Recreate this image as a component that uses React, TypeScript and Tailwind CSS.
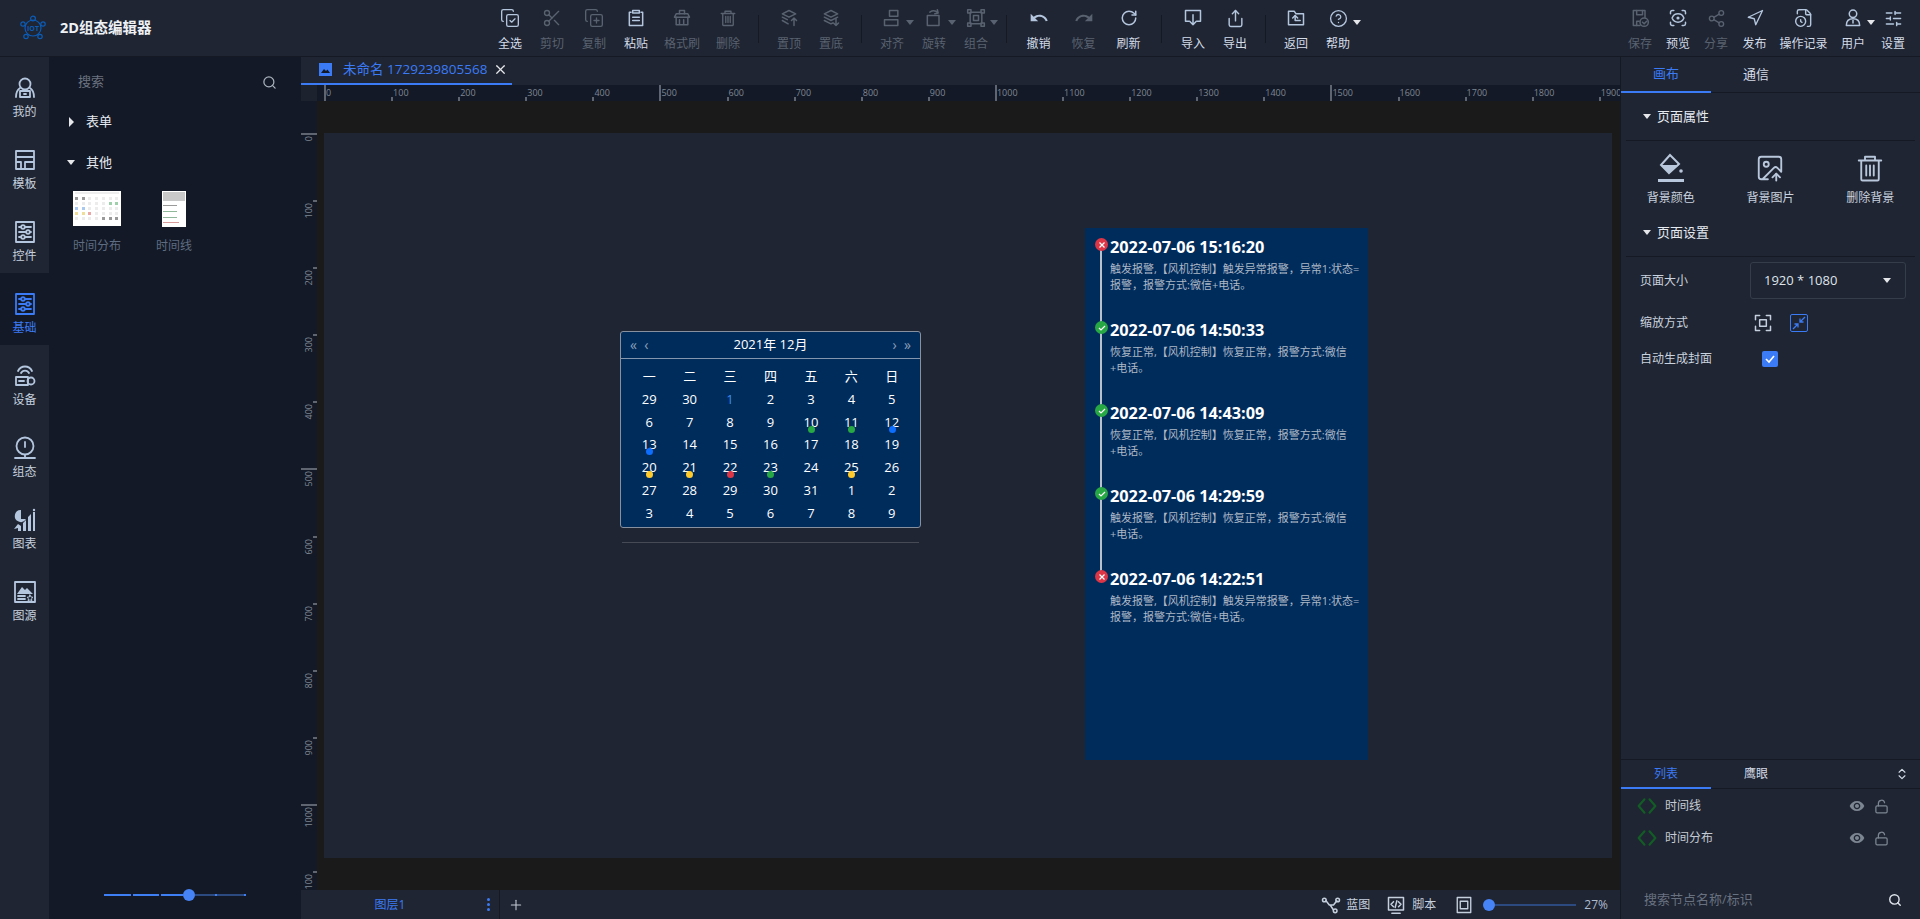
import type { ReactNode } from 'react';
import {
  ChevronsUpDown, CircleHelp, CopyCheck, CopyPlus, FileClock, ImageUp, LockOpen, Navigation,
  Plus, RotateCw, ScanEye, Scissors, Search, Share, Share2, SlidersHorizontal, X,
} from 'lucide-react';

const Svg = ({ children, size = 20, sw = 1.8 }: { children: ReactNode; size?: number; sw?: number }) => (
  <svg width={size} height={size} viewBox="0 0 24 24" fill="none" stroke="currentColor" strokeWidth={sw} strokeLinecap="round" strokeLinejoin="round">
    {children}
  </svg>
);

const Solid = ({ d, size = 20 }: { d: string; size?: number }) => (
  <svg width={size} height={size} viewBox="0 0 24 24" fill="currentColor">
    <path d={d} />
  </svg>
);

const Caret = ({ right = false }: { right?: boolean }) =>
  right ? (
    <span className="inline-block h-0 w-0 border-y-[5px] border-l-[5px] border-y-transparent border-l-[#e5e7eb]" />
  ) : (
    <span className="inline-block h-0 w-0 border-x-[4px] border-t-[5px] border-x-transparent border-t-[#e5e7eb]" />
  );

// hand drawn toolbar icons
const Paste = () => <Svg><path d="M8 3h8v3H8z" /><path d="M6 5H4v16h16V5h-2" /><path d="M8 11h8M8 15h8" /></Svg>;
const Brush = () => <Svg><path d="M9 7V3h6v4" /><path d="M3 11l2-4h14l2 4z" /><path d="M5 11v9h14v-9M9 14v6M14 14v6" /></Svg>;
const Bin = ({ size = 20, sw = 1.8 }: { size?: number; sw?: number }) => (
  <Svg size={size} sw={sw}><path d="M3 6h18M8 6V3h8v3M5 6v15a1 1 0 0 0 1 1h12a1 1 0 0 0 1-1V6M9 10v8M12 10v8M15 10v8" /></Svg>
);
const ToTop = () => <Svg><path d="M12 3l8 4-8 4-8-4z" /><path d="M4 11l6 3M4 15l7 4" /><path d="M18 21v-9M15 15l3-3 3 3" /></Svg>;
const ToBottom = () => <Svg><path d="M12 3l8 4-8 4-8-4z" /><path d="M4 11l8 4 8-4" /><path d="M4 15l8 4 2-1" /><path d="M18 13v8M15 18l3 3 3-3" /></Svg>;
const Align = () => <Svg><path d="M9 3h10v7H9zM3 14h16v7H3z" /></Svg>;
const Rotate = () => <Svg><path d="M4 9h14v12H4z" /><path d="M7 5c3-2 7-2 10 1M16 2l1 4-4 1" /></Svg>;
const GroupIcon = () => <Svg><path d="M5 5h14v14H5z" /><path d="M2 2h4v4H2zM18 2h4v4h-4zM2 18h4v4H2zM18 18h4v4h-4z" /><path d="M9 9h6v6H9z" /></Svg>;
const Import = () => <Svg><path d="M7 16H3V3h18v13h-4" /><path d="M12 8v12M8 16l4 4 4-4" /></Svg>;
const Back = () => <Svg><path d="M3 20V4h7l2 3h9v13z" /><path d="M8 12l3-3 3 3" /><path d="M11 9v6h6" /></Svg>;
const Save = () => <Svg><path d="M12 21H4V3h14v8" /><path d="M8 3v5h7V3M8 21v-5h3" /><circle cx="17" cy="17" r="5" /><path d="M15 17l2 2 3-3" /></Svg>;
const UserCaret = () => <Svg><circle cx="12" cy="7" r="4.5" /><path d="M4 21c0-6 3-8 8-8s8 2 8 8z" /><path d="M12 15v3" /></Svg>;
const Mine = () => <Svg size={24}><circle cx="12" cy="8" r="5.5" /><path d="M3 21c0-5 1-7 4-9M21 21c0-5-1-7-4-9" /><path d="M7 15h10v6H7z" /><path d="M11 18h2" /></Svg>;
const Template = () => <Svg size={24}><path d="M3 3h18v18H3zM3 9h18M12 14h9M12 14v7M3 14h5v7" /></Svg>;
const Control = () => <Svg size={24}><path d="M3 2h18v20H3z" /><path d="M6 7h12M6 12h12M6 17h12" /><circle cx="10" cy="7" r="1.8" fill="#1f2532" /><circle cx="15" cy="12" r="1.8" fill="#1f2532" /><circle cx="10" cy="17" r="1.8" fill="#1f2532" /></Svg>;
const Device = () => <Svg size={24}><path d="M8 9a4.5 4.5 0 0 1 8 0M5 7c3-6 11-6 14 0" /><path d="M3 13h12v8H3z" /><path d="M6 17h5" /><circle cx="18" cy="17" r="3.5" /></Svg>;
const GaugeIcon = () => <Svg size={24}><circle cx="12" cy="10" r="8.5" /><path d="M12 6v5M8 22h8M2 22h20M12 19v3" /></Svg>;
const ChartIcon = () => (
  <svg width="24" height="24" viewBox="0 0 24 24" fill="currentColor">
    <path d="M8 2a6 6 0 1 0 5 9H8z" />
    <path d="M1 21l4-5 3 2v5H5v-3zM10 23v-8l3-3v11zM15 23V9l3-3v17zM20 23V4h2v19z" />
    <circle cx="21" cy="2" r="1.2" />
  </svg>
);
const ImageSource = () => (
  <Svg size={24}>
    <path d="M2 2h20v20H2z" />
    <path d="M4 14l5-7 3 3 2-2 6 6z" fill="currentColor" stroke="none" />
    <path d="M5 16h7M5 19h7" />
    <path d="M17 15l1 2 2 .3-1.5 1.4.4 2.1-1.9-1-1.9 1 .4-2.1L14 17.3l2-.3z" strokeWidth="1" />
  </Svg>
);

const Bucket = () => (
  <svg width="30" height="30" viewBox="0 0 30 30" fill="none" stroke="#b9c7dc" strokeWidth="2">
    <path d="M14 2l-9 10 8 8 10-9z" />
    <path d="M5 12h18l-10 8z" fill="#b9c7dc" stroke="none" />
    <circle cx="25" cy="18" r="1.8" fill="#b9c7dc" stroke="none" />
    <path d="M2 26h26v3H2z" fill="#b9c7dc" stroke="none" />
  </svg>
);

const undoPath = 'M12.5 8c-2.65 0-5.05.99-6.9 2.6L2 7v9h9l-3.62-3.62c1.39-1.16 3.16-1.88 5.12-1.88 3.54 0 6.55 2.31 7.6 5.5l2.37-.78C21.08 11.03 17.15 8 12.5 8z';
const redoPath = 'M18.4 10.6C16.55 8.99 14.15 8 11.5 8c-4.65 0-8.58 3.03-9.96 7.22L3.9 16c1.05-3.19 4.05-5.5 7.6-5.5 1.95 0 3.73.72 5.12 1.88L13 16h9V7l-3.6 3.6z';
const eyePath = 'M12 4.5C7 4.5 2.73 7.61 1 12c1.73 4.39 6 7.5 11 7.5s9.27-3.11 11-7.5c-1.73-4.39-6-7.5-11-7.5zM12 17c-2.76 0-5-2.24-5-5s2.24-5 5-5 5 2.24 5 5-2.24 5-5 5zm0-8c-1.66 0-3 1.34-3 3s1.34 3 3 3 3-1.34 3-3-1.34-3-3-3z';

type Tool = { label: string; icon: ReactNode; width: string; off?: boolean; caret?: boolean };

const ToolBtn = ({ tool }: { tool: Tool }) => (
  <div className={`flex shrink-0 flex-col items-center ${tool.width} ${tool.off ? 'text-[#596270]' : 'text-[#b4c6de]'}`}>
    <div className="relative flex h-[24px] items-center">
      {tool.icon}
      {tool.caret && (
        <span className={`absolute top-[14px] left-[24px] h-0 w-0 border-x-[4px] border-t-[5px] border-x-transparent ${tool.off ? 'border-t-[#596270]' : 'border-t-[#e5e7eb]'}`} />
      )}
    </div>
    <span className={`mt-[5px] text-[12px] leading-[17px] whitespace-nowrap ${tool.off ? 'text-[#596270]' : 'text-[#d3dce8]'}`}>{tool.label}</span>
  </div>
);

const Sep = ({ w = 'w-[19px]' }: { w?: string }) => (
  <div className={`flex h-[28px] shrink-0 justify-center self-center ${w}`}>
    <div className="h-full w-px bg-[#141923]" />
  </div>
);

const w42 = 'w-[42px]';
const w45 = 'w-[45px]';
const toolGroups: Tool[][] = [
  [
    { label: '全选', icon: <CopyCheck size={20} strokeWidth={1.6} />, width: w42 },
    { label: '剪切', icon: <Scissors size={20} strokeWidth={1.6} />, width: w42, off: true },
    { label: '复制', icon: <CopyPlus size={20} strokeWidth={1.6} />, width: w42, off: true },
    { label: '粘贴', icon: <Paste />, width: w42 },
    { label: '格式刷', icon: <Brush />, width: 'w-[50px]', off: true },
    { label: '删除', icon: <Bin size={18} />, width: w42, off: true },
  ],
  [
    { label: '置顶', icon: <ToTop />, width: w42, off: true },
    { label: '置底', icon: <ToBottom />, width: w42, off: true },
  ],
  [
    { label: '对齐', icon: <Align />, width: w42, off: true, caret: true },
    { label: '旋转', icon: <Rotate />, width: w42, off: true, caret: true },
    { label: '组合', icon: <GroupIcon />, width: w42, off: true, caret: true },
  ],
  [
    { label: '撤销', icon: <Solid d={undoPath} />, width: w45 },
    { label: '恢复', icon: <Solid d={redoPath} />, width: w45, off: true },
    { label: '刷新', icon: <RotateCw size={18} strokeWidth={2} />, width: w45 },
  ],
  [
    { label: '导入', icon: <Import />, width: w42 },
    { label: '导出', icon: <Share size={19} strokeWidth={1.8} />, width: w42 },
  ],
  [
    { label: '返回', icon: <Back />, width: w42 },
    { label: '帮助', icon: <CircleHelp size={19} strokeWidth={1.7} />, width: w42, caret: true },
  ],
];

const rightTools: Tool[] = [
  { label: '保存', icon: <Save />, width: 'w-[38px]', off: true },
  { label: '预览', icon: <ScanEye size={20} strokeWidth={1.8} />, width: 'w-[38px]' },
  { label: '分享', icon: <Share2 size={19} strokeWidth={1.7} />, width: 'w-[38px]', off: true },
  { label: '发布', icon: <Navigation size={18} strokeWidth={1.8} />, width: 'w-[39px]' },
  { label: '操作记录', icon: <FileClock size={20} strokeWidth={1.7} />, width: 'w-[59px]' },
  { label: '用户', icon: <UserCaret />, width: 'w-[40px]', caret: true },
  { label: '设置', icon: <SlidersHorizontal size={19} strokeWidth={1.8} />, width: 'w-[40px]' },
];

const Logo = () => (
  <svg width="26" height="26" viewBox="0 0 26 26" fill="none" stroke="#0b5cb8" strokeWidth="1.2">
    <circle cx="13" cy="13" r="8" />
    <circle cx="13" cy="3.5" r="2.4" />
    <circle cx="3" cy="9" r="2.2" />
    <circle cx="23" cy="9" r="2.2" />
    <circle cx="6" cy="21.5" r="2.2" />
    <circle cx="20" cy="21.5" r="2.2" />
    <text x="13" y="15.5" fontSize="7" fontWeight="700" textAnchor="middle" fill="#0b5cb8" stroke="none">IOT</text>
  </svg>
);

const rail = [
  { label: '我的', icon: <Mine /> },
  { label: '模板', icon: <Template /> },
  { label: '控件', icon: <Control /> },
  { label: '基础', icon: <Control />, active: true },
  { label: '设备', icon: <Device /> },
  { label: '组态', icon: <GaugeIcon /> },
  { label: '图表', icon: <ChartIcon /> },
  { label: '图源', icon: <ImageSource /> },
];

const rulerMarks = Array.from({ length: 20 }, (_, i) => i * 100);
const sideMarks = Array.from({ length: 12 }, (_, i) => i * 100);

const CalThumb = () => (
  <div className="flex h-[35px] w-[48px] flex-col bg-white px-[2px] py-[1px]">
    <div className="mb-[3px] h-[2px] w-full bg-[#eeeeee]" />
    <div className="grid grid-cols-7 gap-x-[3px] gap-y-[2px]">
      {Array.from({ length: 35 }, (_, i) => (
        <span
          key={i}
          className={`h-[3px] w-[3px] ${
            i < 2 || i > 31 ? 'bg-[#999]' : i === 12 || i === 13 ? 'bg-[#9fd0ac]' : i === 14 || i === 15 ? 'bg-[#a8c8f0]' : i === 21 || i === 22 ? 'bg-[#f0dd98]' : i === 23 ? 'bg-[#eaa5a5]' : 'bg-[#ececec]'
          }`}
        />
      ))}
    </div>
  </div>
);

const TimeThumb = () => (
  <div className="flex h-[36px] w-[24px] flex-col bg-white p-[1px]">
    <div className="h-[9px] w-full bg-[#c9c9c9]" />
    <div className="mt-[4px] h-[1px] w-[14px] bg-[#9a9a9a]" />
    <div className="mt-[5px] h-[1px] w-[14px] bg-[#8fb79a]" />
    <div className="mt-[5px] h-[1px] w-[14px] bg-[#8fb79a]" />
    <div className="mt-[4px] h-[1px] w-[16px] bg-[#d99a9a]" />
  </div>
);

const weekDays = ['一', '二', '三', '四', '五', '六', '日'];
const calDays = [
  29, 30, 1, 2, 3, 4, 5, 6, 7, 8, 9, 10, 11, 12, 13, 14, 15, 16, 17, 18, 19, 20, 21, 22, 23, 24, 25, 26, 27, 28, 29, 30, 31, 1, 2, 3, 4, 5, 6, 7, 8, 9,
];
const dotByIndex: Record<number, string> = {
  11: 'bg-[#28a745]',
  12: 'bg-[#28a745]',
  13: 'bg-[#0d6efd]',
  14: 'bg-[#0d6efd]',
  21: 'bg-[#ffca2c]',
  22: 'bg-[#ffca2c]',
  23: 'bg-[#dc3545]',
  24: 'bg-[#28a745]',
  26: 'bg-[#ffca2c]',
};

const Calendar = () => (
  <div className="w-[301px] rounded-[3px] border border-[#87909e] bg-[#002c5c] text-white">
    <div className="flex h-[27px] items-center justify-between border-b border-[#8496ae] px-[9px]">
      <span className="text-[14px] leading-none text-[#8ba0ba]">« &nbsp;‹</span>
      <span className="text-[13px]">2021年 12月</span>
      <span className="text-[14px] leading-none text-[#8ba0ba]">› &nbsp;»</span>
    </div>
    <div className="grid auto-rows-[22.8px] grid-cols-7 px-[8px] pt-[6px] pb-[2px] text-center text-[13px] leading-[22.8px]">
      {weekDays.map(d => (
        <span key={d}>{d}</span>
      ))}
      {calDays.map((d, i) => (
        <span key={i} className={`relative ${i === 2 ? 'text-[#3d8bf0]' : ''}`}>
          {d}
          {dotByIndex[i] && <span className={`absolute top-[15px] left-[17px] h-[7px] w-[7px] rounded-full ${dotByIndex[i]}`} />}
        </span>
      ))}
    </div>
  </div>
);

// the wide comma is written as an escape so it stays U+FF0C
const events = [
  { ok: false, time: '2022-07-06 15:16:20', text: '触发报警,【风机控制】触发异常报警\uFF0C异常1:状态=报警\uFF0C报警方式:微信+电话。' },
  { ok: true, time: '2022-07-06 14:50:33', text: '恢复正常,【风机控制】恢复正常\uFF0C报警方式:微信+电话。' },
  { ok: true, time: '2022-07-06 14:43:09', text: '恢复正常,【风机控制】恢复正常\uFF0C报警方式:微信+电话。' },
  { ok: true, time: '2022-07-06 14:29:59', text: '触发报警,【风机控制】恢复正常\uFF0C报警方式:微信+电话。' },
  { ok: false, time: '2022-07-06 14:22:51', text: '触发报警,【风机控制】触发异常报警\uFF0C异常1:状态=报警\uFF0C报警方式:微信+电话。' },
];

const Timeline = () => (
  <div className="h-[532px] w-[283px] bg-[#002c5c]">
    {events.map((e, i) => (
      <div key={e.time} className="relative h-[83px] pt-[9px] pl-[25px]">
        {i < events.length - 1 && <span className="absolute top-[16px] left-[15px] h-[83px] w-[2px] bg-[#b8c0cc]" />}
        <span className={`absolute top-[10px] left-[10px] flex h-[13px] w-[13px] items-center justify-center rounded-full ${e.ok ? 'bg-[#28a745]' : 'bg-[#dc3545]'}`}>
          <svg width="8" height="8" viewBox="0 0 8 8" fill="none" stroke="#fff" strokeWidth="1.2">
            {e.ok ? <path d="M1 4l2 2 4-4" /> : <path d="M1.5 1.5l5 5M6.5 1.5l-5 5" />}
          </svg>
        </span>
        <div className="text-[16.3px] leading-[20px] font-bold whitespace-nowrap text-white">{e.time}</div>
        <div className="mt-[4px] w-[250px] text-[11px] leading-[16px] text-[#aeb8c6]">{e.text}</div>
      </div>
    ))}
  </div>
);

const layers = ['时间线', '时间分布'];

const SectionHead = ({ title }: { title: string }) => (
  <div className="mx-[5px] flex h-[48px] items-center gap-[6px] border-b border-[#141923] pl-[17px] text-[13px] text-[#e5e9f0]">
    <Caret />
    <span>{title}</span>
  </div>
);

export default function App() {
  return (
    <div className="flex h-screen w-screen flex-col overflow-hidden bg-[#1f2532] font-['Open_Sans','Noto_Sans_CJK_SC',sans-serif] text-[12px] text-[#c9d2df]">
      {/* top toolbar */}
      <header className="flex h-[57px] shrink-0 items-start border-b border-[#141923] pt-[6px]">
        <div className="flex h-[44px] w-[489px] shrink-0 items-center pl-[20px]">
          <Logo />
          <span className="ml-[14px] text-[14.5px] font-bold text-[#eef1f6]">2D组态编辑器</span>
        </div>
        {toolGroups.map((group, i) => (
          <div key={i} className="flex shrink-0">
            {i > 0 && <Sep w={i === 4 ? 'w-[21px]' : 'w-[19px]'} />}
            {group.map(t => (
              <ToolBtn key={t.label} tool={t} />
            ))}
          </div>
        ))}
        <div className="ml-auto flex pr-[7px]">
          {rightTools.map(t => (
            <ToolBtn key={t.label} tool={t} />
          ))}
        </div>
      </header>

      <div className="flex min-h-0 flex-1">
        {/* icon rail */}
        <nav className="w-[49px] shrink-0">
          {rail.map(r => (
            <div key={r.label} className={`flex h-[72px] flex-col items-center pt-[19px] ${r.active ? 'bg-[#131926] text-[#3b7bf6]' : 'text-[#b4c6de]'}`}>
              {r.icon}
              <span className={`mt-[3px] text-[12px] leading-[17px] ${r.active ? 'text-[#3b7bf6]' : 'text-[#c5d0df]'}`}>{r.label}</span>
            </div>
          ))}
        </nav>

        {/* component panel */}
        <aside className="flex w-[252px] shrink-0 flex-col bg-[#131926]">
          <div className="flex h-[44px] shrink-0 items-center justify-between pt-[6px] pr-[24px] pl-[29px] text-[13px] text-[#6b7380]">
            <span>搜索</span>
            <Search size={15} strokeWidth={2} className="text-[#aab2be]" />
          </div>
          <div className="flex h-[41px] items-center pl-[20px] text-[13px] text-[#e5e9f0]">
            <span className="flex w-[17px]"><Caret right /></span>
            表单
          </div>
          <div className="flex h-[41px] items-center pl-[18px] text-[13px] text-[#e5e9f0]">
            <span className="flex w-[19px]"><Caret /></span>
            其他
          </div>
          <div className="mt-[8px] flex pl-[24px]">
            <div className="flex w-[83px] flex-col items-start">
              <CalThumb />
              <span className="mt-[11px] text-[12px] leading-[17px] text-[#5f6d82]">时间分布</span>
            </div>
            <div className="flex flex-col items-center">
              <TimeThumb />
              <span className="mt-[10px] text-[12px] leading-[17px] text-[#5f6d82]">时间线</span>
            </div>
          </div>
          <div className="mt-auto mb-[18px] ml-[55px] flex h-[12px] w-[143px] items-center">
            <span className="h-[2px] w-[27px] bg-[#3f7ff5]" />
            <span className="ml-[2px] h-[2px] w-[26px] bg-[#3f7ff5]" />
            <span className="ml-[2px] h-[2px] w-[22px] bg-[#3f7ff5]" />
            <span className="h-[12px] w-[12px] shrink-0 rounded-full bg-[#4683f7]" />
            <span className="h-[2px] w-[20px] bg-[#2c4a80]" />
            <span className="h-[2px] w-[2px] bg-[#3f7ff5]" />
            <span className="h-[2px] w-[27px] bg-[#2c4a80]" />
            <span className="h-[2px] w-[2px] bg-[#3f7ff5]" />
          </div>
        </aside>

        {/* center workspace */}
        <main className="flex min-w-0 flex-1 flex-col">
          <div className="flex h-[28px] shrink-0">
            <div className="flex w-[211px] items-center border-b-2 border-[#3b7bf6] pb-[1px] pl-[18px]">
              <svg width="13" height="13" viewBox="0 0 13 13" fill="#3b7bf6" className="shrink-0">
                <path d="M0 0h13v13H0z" />
                <path d="M2 10l3-4 2 2 1.5-1.5L11 10z" fill="#131926" />
              </svg>
              <span className="ml-[11px] text-[13.5px] whitespace-nowrap text-[#3b7bf6]">未命名 1729239805568</span>
              <X size={15} strokeWidth={2} className="ml-[6px] shrink-0 text-[#e5e7eb]" />
            </div>
          </div>
          <div className="flex h-[16px] shrink-0">
            <div className="w-[16px] shrink-0 bg-[#1c222e]" />
            <div className="flex flex-1 overflow-hidden bg-[#131926] pl-[7px]">
              {rulerMarks.map(m => (
                <div key={m} className="relative h-full w-[67.1px] shrink-0 pl-[2px] text-[9px] leading-[15px] text-[#7f8794]">
                  <span className={`absolute bottom-0 left-0 w-[2px] bg-[#5f6672] ${m % 500 === 0 ? 'h-[16px]' : 'h-[4px]'}`} />
                  {m}
                </div>
              ))}
            </div>
          </div>
          <div className="flex min-h-0 flex-1">
            <div className="w-[16px] shrink-0 overflow-hidden bg-[#131926] pt-[32px]">
              {sideMarks.map(m => (
                <div key={m} className="relative flex h-[67.1px] flex-col pt-[3px] pl-[3px] text-[9px] leading-[10px] text-[#7f8794]">
                  <span className={`absolute top-0 right-0 h-[2px] bg-[#5f6672] ${m % 500 === 0 ? 'w-[16px]' : 'w-[4px]'}`} />
                  <span className="rotate-180 self-start [writing-mode:vertical-rl]">{m}</span>
                </div>
              ))}
            </div>
            <div className="min-w-0 flex-1 bg-[#1a1a1a] pt-[32px] pr-[8px] pb-[32px] pl-[7px]">
              <div className="relative h-full bg-[#1f2532]">
                <div className="absolute top-[198px] left-[296px]">
                  <Calendar />
                  <div className="mx-[2px] mt-[14px] h-px bg-[#454a54]" />
                </div>
                <div className="absolute top-[95px] left-[761px]">
                  <Timeline />
                </div>
              </div>
            </div>
          </div>
          <div className="flex h-[29px] shrink-0 items-center">
            <div className="relative flex h-full w-[199px] items-center justify-center border-r border-[#141923] pr-[20px] text-[12px] text-[#3b7bf6]">
              图层1
              <span className="absolute right-[9px] flex flex-col gap-[2px]">
                <span className="h-[3px] w-[3px] rounded-full bg-[#3b7bf6]" />
                <span className="h-[3px] w-[3px] rounded-full bg-[#3b7bf6]" />
                <span className="h-[3px] w-[3px] rounded-full bg-[#3b7bf6]" />
              </span>
            </div>
            <Plus size={16} strokeWidth={1.6} className="ml-[8px] text-[#c5cbd5]" />
            <div className="ml-auto flex items-center pr-[12px] text-[#c5d0df]">
              <Svg size={20}>
                <circle cx="4" cy="6" r="2.2" />
                <circle cx="20" cy="6" r="2.2" />
                <circle cx="17" cy="19" r="2.2" />
                <path d="M6 7l4 5h5l4-5M11 12l4 6" />
              </Svg>
              <span className="mr-[16px] ml-[5px]">蓝图</span>
              <Svg size={20}>
                <path d="M3 3h18v15H3zM7 22h10" />
                <path d="M9 8l-3 3 3 3M15 8l3 3-3 3M13 7l-2 8" />
              </Svg>
              <span className="ml-[6px]">脚本</span>
              <span className="ml-[19px] flex"><Svg size={18}><path d="M3 2h18v20H3z" /><path d="M7 7h10v10H7z" /></Svg></span>
              <span className="ml-[10px] h-[12px] w-[12px] rounded-full bg-[#4683f7]" />
              <span className="h-[2px] w-[81px] bg-[#2c4a80]" />
              <span className="ml-[8px] text-[#aebccf]">27%</span>
            </div>
          </div>
        </main>

        {/* property panel */}
        <aside className="flex w-[300px] shrink-0 flex-col border-l border-[#141923]">
          <div className="flex h-[36px] shrink-0 border-b border-[#141923] text-[13px]">
            <div className="-mb-px flex w-[90px] items-center justify-center border-b-2 border-[#3b7bf6] text-[#3b7bf6]">画布</div>
            <div className="flex w-[90px] items-center justify-center text-[#d3dce8]">通信</div>
          </div>
          <SectionHead title="页面属性" />
          <div className="grid h-[68px] shrink-0 grid-cols-3 pt-[12px] text-center">
            <div className="flex flex-col items-center">
              <Bucket />
              <span className="mt-[6px] leading-[17px]">背景颜色</span>
            </div>
            <div className="flex flex-col items-center text-[#b9c7dc]">
              <ImageUp size={30} strokeWidth={1.5} />
              <span className="mt-[6px] leading-[17px] text-[#c9d2df]">背景图片</span>
            </div>
            <div className="flex flex-col items-center text-[#b9c7dc]">
              <Bin size={30} sw={1.5} />
              <span className="mt-[6px] leading-[17px] text-[#c9d2df]">删除背景</span>
            </div>
          </div>
          <SectionHead title="页面设置" />
          <div className="flex flex-col pr-[14px] pl-[19px]">
            <div className="mt-[5px] flex h-[37px] items-center">
              <span className="w-[110px]">页面大小</span>
              <div className="flex h-full flex-1 items-center justify-between rounded-[3px] border border-[#363d4a] pr-[14px] pl-[13px] text-[13px] text-[#dfe4ec]">
                1920 * 1080
                <Caret />
              </div>
            </div>
            <div className="mt-[5px] flex h-[37px] items-center">
              <span className="w-[113px]">缩放方式</span>
              <span className="text-[#c5d0df]">
                <Svg size={20}><path d="M3 8V3h5M16 3h5v5M21 16v5h-5M8 21H3v-5M8 8h8v8H8z" /></Svg>
              </span>
              <span className="ml-[17px] flex h-[18px] w-[18px] items-center justify-center rounded-[2px] border border-[#3b7bf6] text-[#3b7bf6]">
                <svg width="14" height="14" viewBox="0 0 14 14" fill="none" stroke="currentColor" strokeWidth="1.3">
                  <path d="M13 1L8 6M8 2.5V6h3.5M1 13l5-5M2.5 8H6v3.5" />
                </svg>
              </span>
            </div>
            <div className="flex h-[35px] items-center">
              <span className="w-[122px]">自动生成封面</span>
              <span className="flex h-[16px] w-[16px] items-center justify-center rounded-[2px] bg-[#3b7bf6] text-white">
                <svg width="12" height="12" viewBox="0 0 12 12" fill="none" stroke="#fff" strokeWidth="1.6"><path d="M2 6l3 3 5-6" /></svg>
              </span>
            </div>
          </div>

          <div className="mt-auto border-t border-[#141923]">
            <div className="flex h-[29px] border-b border-[#141923] text-[12px]">
              <div className="-mb-px flex w-[90px] items-center justify-center border-b-2 border-[#3b7bf6] text-[#3b7bf6]">列表</div>
              <div className="flex w-[90px] items-center justify-center text-[#d3dce8]">鹰眼</div>
              <ChevronsUpDown size={14} strokeWidth={2} className="mt-[7px] mr-[11px] ml-auto text-[#d3dce8]" />
            </div>
            <div className="pt-[1px]">
              {layers.map(l => (
                <div key={l} className="flex h-[32px] items-center pr-[31px] pl-[16px]">
                  <span className="flex w-[28px] text-[#135c25]">
                    <Svg size={20} sw={2.6}>
                      <path d="M9 4l-7 8 7 8M15 4l7 8-7 8" />
                    </Svg>
                  </span>
                  <span className="text-[#c5cbd5]">{l}</span>
                  <span className="ml-auto flex text-[#7c8592]"><Solid d={eyePath} size={16} /></span>
                  <LockOpen size={15} strokeWidth={2} className="ml-[9px] text-[#7c8592]" />
                </div>
              ))}
            </div>
            <div className="mt-[27px] flex h-[38px] items-center justify-between pr-[18px] pl-[23px] text-[13px] text-[#687180]">
              搜索节点名称/标识
              <Search size={14} strokeWidth={2.4} className="text-[#dfe4ec]" />
            </div>
          </div>
        </aside>
      </div>
    </div>
  );
}
